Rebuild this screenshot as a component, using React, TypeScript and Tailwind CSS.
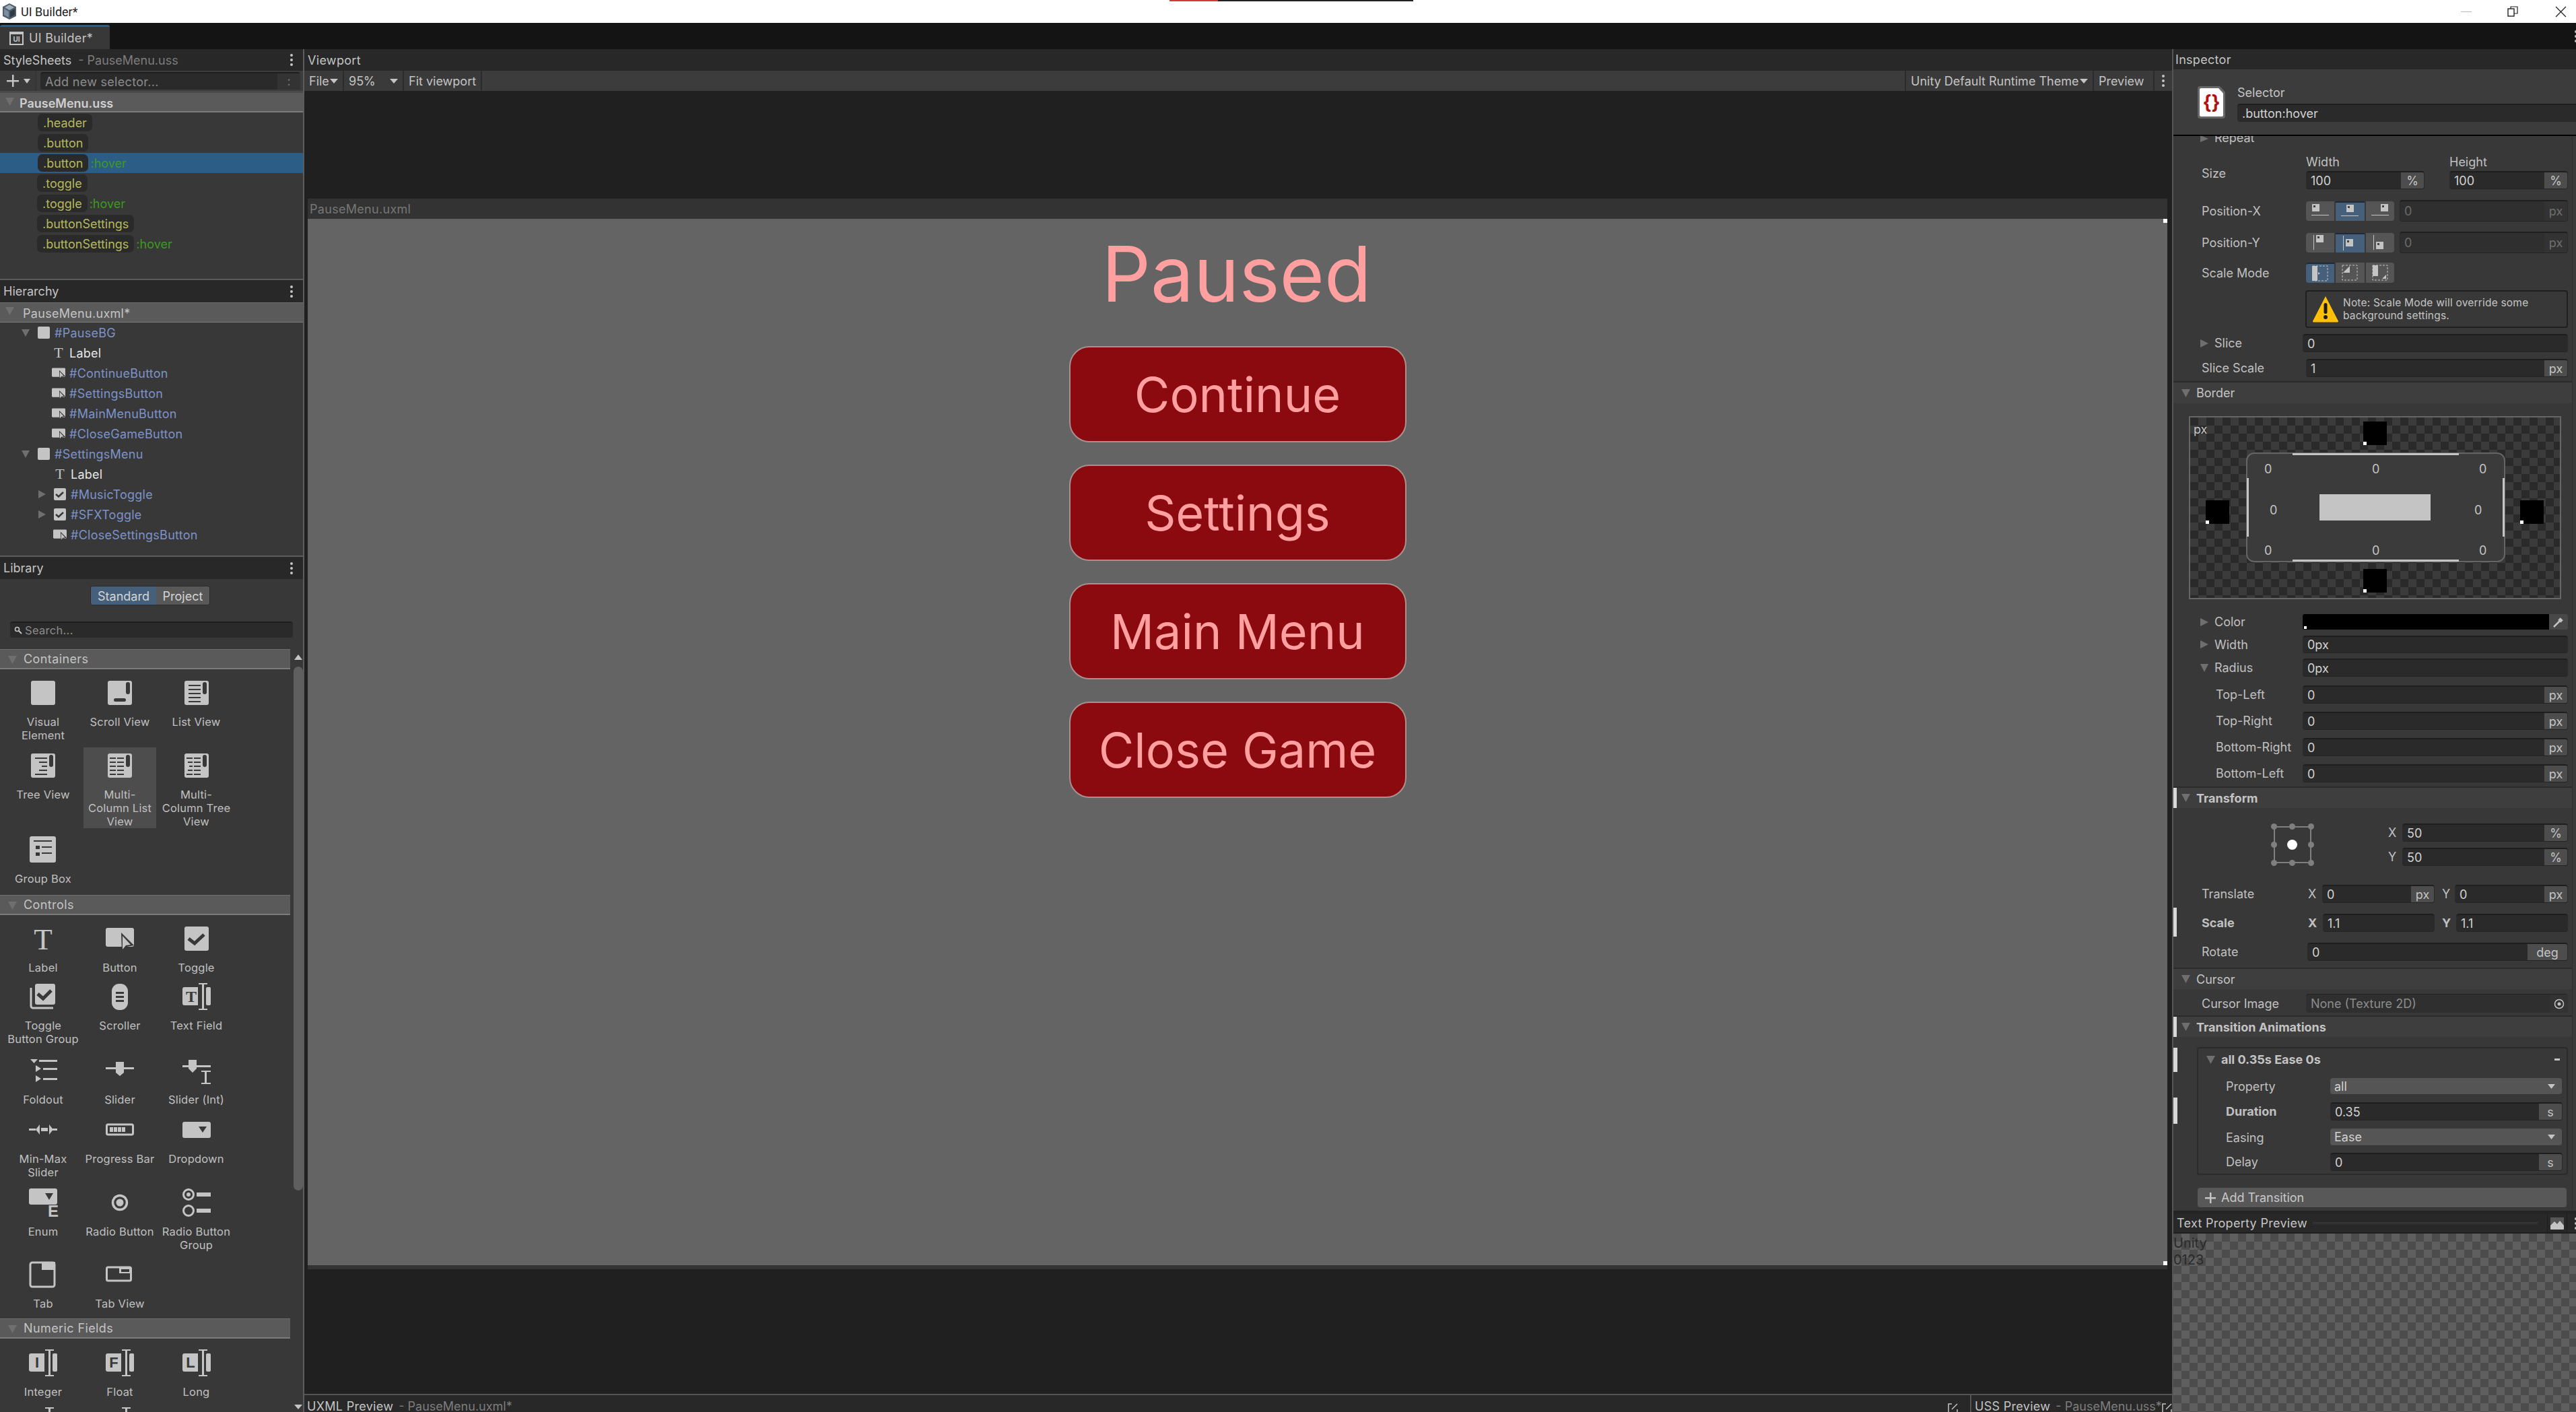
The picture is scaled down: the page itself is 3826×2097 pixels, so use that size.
import React from "react";
import clsx from "clsx";

const C = "#c4c4c4";
const D = "#383838";

function Tri({ dir = "down", cls, color = "#6f6f6f" }: { dir?: "down" | "right" | "up"; cls?: string; color?: string }) {
  const pts = dir === "down" ? "0,0 12,0 6,12" : dir === "right" ? "0,0 12,6 0,12" : "0,12 12,12 6,0";
  return (
    <svg viewBox="0 0 12 12" preserveAspectRatio="none" className={clsx("shrink-0", cls)}>
      <polygon points={pts} fill={color} />
    </svg>
  );
}

function Dots({ cls }: { cls?: string }) {
  return (
    <div className={clsx("flex flex-col gap-[3px]", cls)}>
      <div className="w-[4px] h-[4px] rounded-full bg-[#c4c4c4]" />
      <div className="w-[4px] h-[4px] rounded-full bg-[#c4c4c4]" />
      <div className="w-[4px] h-[4px] rounded-full bg-[#c4c4c4]" />
    </div>
  );
}

const Svg = ({ children, cls }: { children: React.ReactNode; cls?: string }) => (
  <svg viewBox="0 0 42 42" className={clsx("shrink-0 overflow-visible", cls ?? "w-[42px] h-[42px]")}>
    {children}
  </svg>
);

const Lines = ({ rows }: { rows: number[][] }) => (
  <>
    {rows.map((r, i) => (
      <rect key={i} x={r[0]} y={r[1]} width={r[2]} height={r[3]} fill={D} />
    ))}
  </>
);

const FieldIcon = ({ letter }: { letter: string }) => (
  <>
    <rect x="0" y="7" width="42" height="27" rx="3" fill={C} />
    <rect x="23" y="0" width="14" height="42" fill={D} />
    <rect x="24" y="1" width="13" height="2" fill={C} />
    <rect x="24" y="39" width="13" height="2" fill={C} />
    <rect x="29" y="1" width="3" height="40" fill={C} />
    <rect x="35" y="7" width="7" height="27" rx="2" fill={C} />
    <text x="12" y="28" fontSize="22" fontWeight="700" textAnchor="middle" fill={D} fontFamily="'Liberation Sans',sans-serif">
      {letter}
    </text>
  </>
);

const BeamTop = () => (
  <>
    <rect x="24" y="1" width="13" height="2" fill={C} />
    <rect x="29" y="1" width="3" height="40" fill={C} />
  </>
);

const icons: Record<string, React.ReactNode> = {
  visual: <rect x="3" y="3" width="36" height="36" rx="3" fill={C} />,
  scroll: (
    <>
      <rect x="3" y="3" width="36" height="36" rx="3" fill={C} />
      <rect x="30" y="5" width="6" height="18" rx="3" fill={D} />
      <rect x="12" y="29" width="18" height="5" rx="2.5" fill={D} />
    </>
  ),
  list: (
    <>
      <rect x="3" y="3" width="36" height="36" rx="3" fill={C} />
      <rect x="30" y="5" width="6" height="18" rx="3" fill={D} />
      <Lines rows={[[9, 9, 18, 2], [9, 15, 18, 2], [9, 21, 18, 2], [9, 27, 18, 2], [9, 33, 18, 2]]} />
    </>
  ),
  tree: (
    <>
      <rect x="3" y="3" width="36" height="36" rx="3" fill={C} />
      <rect x="30" y="5" width="6" height="18" rx="3" fill={D} />
      <Lines rows={[[9, 9, 18, 2], [15, 15, 12, 2], [19, 21, 8, 2], [15, 27, 12, 2], [9, 33, 18, 2]]} />
    </>
  ),
  mclist: (
    <>
      <rect x="3" y="3" width="36" height="36" rx="3" fill={C} />
      <rect x="30" y="5" width="6" height="18" rx="3" fill={D} />
      <Lines rows={[[6, 9, 9, 2], [17, 9, 10, 2], [6, 15, 9, 2], [17, 15, 10, 2], [6, 21, 9, 2], [17, 21, 10, 2], [6, 27, 9, 2], [17, 27, 10, 2], [6, 33, 9, 2], [17, 33, 10, 2]]} />
    </>
  ),
  mctree: (
    <>
      <rect x="3" y="3" width="36" height="36" rx="3" fill={C} />
      <rect x="30" y="5" width="6" height="18" rx="3" fill={D} />
      <Lines rows={[[6, 9, 9, 2], [17, 9, 10, 2], [8, 15, 7, 2], [17, 15, 10, 2], [10, 21, 5, 2], [17, 21, 10, 2], [8, 27, 7, 2], [17, 27, 10, 2], [6, 33, 9, 2], [17, 33, 10, 2]]} />
    </>
  ),
  group: (
    <>
      <rect x="1" y="1" width="39" height="39" rx="3" fill={C} />
      <Lines rows={[[7, 7, 27, 2], [10, 15, 6, 5], [19, 16, 15, 2], [10, 25, 6, 5], [19, 25, 15, 2]]} />
    </>
  ),
  label: (
    <text x="21" y="37" fontSize="45" textAnchor="middle" fill={C} fontFamily="'Liberation Serif',serif">
      T
    </text>
  ),
  button: (
    <>
      <rect x="0" y="5" width="42" height="28" rx="3" fill={C} />
      <polygon points="23,12 42,31 31,33 24,41" fill={D} />
      <polygon points="25,17 37,30 30,31 25,37" fill={C} />
    </>
  ),
  toggle: (
    <>
      <rect x="3" y="3" width="36" height="36" rx="3" fill={C} />
      <polyline points="9,21 18,28 32,15" fill="none" stroke={D} strokeWidth="5" />
    </>
  ),
  togglegroup: (
    <>
      <path d="M3 8 V35 a3 3 0 0 0 3 3 H36" fill="none" stroke={C} strokeWidth="3" />
      <rect x="9" y="2" width="30" height="31" rx="3" fill={C} />
      <polyline points="13,17 21,24 33,12" fill="none" stroke={D} strokeWidth="5" />
    </>
  ),
  scroller: (
    <>
      <rect x="9" y="2" width="24" height="39" rx="11" fill={C} />
      <Lines rows={[[15, 14, 12, 3], [15, 20, 12, 3], [15, 26, 12, 3]]} />
    </>
  ),
  textfield: (
    <>
      <rect x="0" y="7" width="42" height="27" rx="3" fill={C} />
      <rect x="23" y="0" width="14" height="42" fill={D} />
      <rect x="24" y="1" width="13" height="2" fill={C} />
      <rect x="24" y="39" width="13" height="2" fill={C} />
      <rect x="29" y="1" width="3" height="40" fill={C} />
      <rect x="35" y="7" width="7" height="27" rx="2" fill={C} />
      <text x="13" y="29" fontSize="24" fontWeight="700" textAnchor="middle" fill={D} fontFamily="'Liberation Serif',serif">
        T
      </text>
    </>
  ),
  foldout: (
    <>
      <polygon points="2,4 13,4 7.5,10" fill={C} />
      <rect x="15" y="5" width="27" height="3" fill={C} />
      <polygon points="10,13 18,18 10,23" fill={C} />
      <rect x="21" y="17" width="21" height="3" fill={C} />
      <polygon points="10,28 18,33 10,38" fill={C} />
      <rect x="21" y="32" width="21" height="3" fill={C} />
    </>
  ),
  slider: (
    <>
      <rect x="0" y="16" width="42" height="3" fill={C} />
      <polygon points="15,8 27,8 27,24 21,29 15,24" fill={C} />
    </>
  ),
  sliderint: (
    <>
      <rect x="0" y="13" width="42" height="3" fill={C} />
      <polygon points="9,5 21,5 21,18 15,24 9,18" fill={C} />
      <rect x="28" y="21" width="14" height="2" fill={C} />
      <rect x="28" y="39" width="14" height="2" fill={C} />
      <rect x="33" y="22" width="3" height="18" fill={C} />
    </>
  ),
  minmax: (
    <>
      <rect x="0" y="19" width="10" height="3" fill={C} />
      <polygon points="16,13 10,20.5 16,28" fill={C} />
      <rect x="18" y="18" width="10" height="5" fill={C} />
      <polygon points="30,13 36,20.5 30,28" fill={C} />
      <rect x="35" y="19" width="7" height="3" fill={C} />
    </>
  ),
  progress: (
    <>
      <rect x="1.5" y="13" width="39" height="15" rx="2" fill="none" stroke={C} strokeWidth="3" />
      <rect x="6" y="17" width="5" height="7" fill={C} />
      <rect x="12" y="17" width="5" height="7" fill={C} />
      <rect x="18" y="17" width="5" height="7" fill={C} />
      <rect x="24" y="17" width="5" height="7" fill={C} />
    </>
  ),
  dropdown: (
    <>
      <rect x="0" y="9" width="42" height="24" rx="3" fill={C} />
      <polygon points="24,16 36,16 30,25" fill={D} />
    </>
  ),
  enum: (
    <>
      <rect x="0" y="0" width="42" height="24" rx="3" fill={C} />
      <polygon points="24,7 36,7 30,17" fill={D} />
      <text x="36" y="42" fontSize="24" fontWeight="700" textAnchor="middle" fill={C} fontFamily="'Liberation Sans',sans-serif">
        E
      </text>
    </>
  ),
  radio: (
    <>
      <circle cx="21" cy="21" r="10.5" fill="none" stroke={C} strokeWidth="3.5" />
      <circle cx="21" cy="21" r="5.5" fill={C} />
    </>
  ),
  radiogroup: (
    <>
      <circle cx="9" cy="9" r="7.5" fill="none" stroke={C} strokeWidth="3" />
      <circle cx="9" cy="9" r="3" fill={C} />
      <rect x="21" y="6" width="21" height="6" fill={C} />
      <circle cx="9" cy="33" r="7.5" fill="none" stroke={C} strokeWidth="3" />
      <rect x="21" y="30" width="21" height="6" fill={C} />
    </>
  ),
  tab: (
    <>
      <rect x="2" y="3" width="36" height="36" rx="3" fill="none" stroke={C} strokeWidth="3" />
      <rect x="19" y="2" width="20" height="12" fill={C} />
    </>
  ),
  tabview: (
    <>
      <rect x="1.5" y="10" width="36" height="20" rx="2" fill="none" stroke={C} strokeWidth="3" />
      <rect x="20" y="10" width="18" height="9" fill={C} />
      <rect x="23" y="13" width="12" height="4" fill={D} />
    </>
  ),
  integer: <FieldIcon letter="I" />,
  float: <FieldIcon letter="F" />,
  long: <FieldIcon letter="L" />,
  beam: <BeamTop />,
  updown: <polygon points="21,10 27,18 15,18" fill={C} />,
};

type Cell = { t: string; i: string; hl?: boolean };

function LibItem({ t, i, hl }: Cell) {
  return (
    <div className={clsx("flex flex-col items-center pt-[6px] mx-[3px] h-fit", hl && "bg-[#4d4d4d]")}>
      <div className="h-[42px] flex items-center justify-center">
        <Svg>{icons[i]}</Svg>
      </div>
      <div className="mt-[12px] text-[16.5px] leading-[20px] text-center whitespace-pre-line text-[#c0c0c0] tracking-[0.2px]">{t}</div>
    </div>
  );
}

function LibRow({ cells, cls }: { cells: Cell[]; cls: string }) {
  return (
    <div className={clsx("grid grid-cols-[114px_114px_113px] pl-[7px] shrink-0", cls)}>
      {cells.map((c) => (
        <LibItem key={c.t} {...c} />
      ))}
    </div>
  );
}

function Section({ t }: { t: string }) {
  return (
    <div className="h-[30px] shrink-0 bg-[#5a5a5a] border-t border-t-[#6e6e6e] border-b-2 border-b-[#7c7c7c] flex items-center">
      <Tri cls="w-[13px] h-[12px] ml-[12px] mt-[2px]" />
      <span className="ml-[10px] text-[18px] text-[#c4c4c4] tracking-[0.4px]">{t}</span>
    </div>
  );
}

function PanelHead({ t, sub, cls }: { t: string; sub?: string; cls: string }) {
  return (
    <div className={clsx("flex items-center bg-[#282828] pl-[5px] pr-[15px] shrink-0", cls)}>
      <span className="text-[18px] text-[#c4c4c4]">{t}</span>
      {sub && <span className="ml-[10px] text-[18px] text-[#7d7d7d]">{sub}</span>}
      <Dots cls="ml-auto" />
    </div>
  );
}

function Sel({ name, hover, cls, pill }: { name: string; hover?: boolean; cls?: string; pill: string }) {
  return (
    <div className={clsx("h-[30px] flex items-center shrink-0", cls)}>
      <span className={clsx("h-[26px] flex items-center rounded-[7px] bg-[#2a2a2a] text-[18px] text-[#b5b95c]", pill)}>{name}</span>
      {hover && <span className="ml-[3px] text-[18px] text-[#3c9a1c]">:hover</span>}
    </div>
  );
}

function HierRow({ icon, t, cls, label }: { icon: "box" | "t" | "btn" | "chk"; t: string; cls: string; label?: boolean }) {
  return (
    <div className={clsx("h-[30px] flex items-center shrink-0", cls)}>
      {icon === "box" && (
        <>
          <Tri cls="w-[12px] h-[11px] mr-[12px]" />
          <div className="w-[18px] h-[18px] rounded-[2px] bg-[#c4c4c4] mr-[7px]" />
        </>
      )}
      {icon === "t" && <span className="w-[16px] mr-[8px] text-[22px] leading-[22px] text-[#c4c4c4] text-center font-['Liberation_Serif',serif]">T</span>}
      {icon === "btn" && <Svg cls="w-[20px] h-[20px] mr-[6px]">{icons.button}</Svg>}
      {icon === "chk" && (
        <>
          <Tri dir="right" cls="w-[11px] h-[12px] mr-[12px]" />
          <svg viewBox="0 0 18 18" className="w-[18px] h-[18px] mr-[7px]">
            <rect width="18" height="18" rx="2" fill={C} />
            <polyline points="3,9 7,12.5 14,6" fill="none" stroke={D} strokeWidth="2.5" />
          </svg>
        </>
      )}
      <span className={clsx("text-[18px] tracking-[0.25px]", label ? "text-[#e6e6e6]" : "text-[#7c93c9]")}>{t}</span>
    </div>
  );
}

function Left() {
  return (
    <div className="w-[452px] shrink-0 border-r-2 border-r-[#5c5c5c] flex flex-col bg-[#383838] h-full overflow-hidden">
      <PanelHead t="StyleSheets" sub="- PauseMenu.uss" cls="h-[32px]" />
      <div className="h-[30px] shrink-0 bg-[#3c3c3c] flex items-center">
        <div className="w-[54px] h-full bg-[#3a3a3a] flex items-center pl-[10px] gap-[7px] border-r border-r-[#2f2f2f]">
          <svg viewBox="0 0 18 18" className="w-[18px] h-[18px]">
            <rect x="0" y="8" width="18" height="2.5" fill={C} />
            <rect x="8" y="0" width="2.5" height="18" fill={C} />
          </svg>
          <Tri cls="w-[10px] h-[7px]" color={C} />
        </div>
        <div className="ml-[6px] w-[386px] h-[26px] bg-[#2a2a2a] rounded-[4px] border-t-2 border-t-[#1e1e1e] flex items-center justify-between">
          <span className="pl-[7px] text-[18px] text-[#8c8c8c] tracking-[0.3px]">Add new selector...</span>
          <span className="w-[34px] text-center text-[18px] leading-[24px] text-[#7a7a7a] bg-[#333333] h-full">:</span>
        </div>
      </div>
      <div className="h-[3px] shrink-0 bg-[#4a4a4a]" />
      <div className="h-[29px] shrink-0 bg-[#5a5a5a] border-b-2 border-b-[#7c7c7c] flex items-center pt-[4px]">
        <Tri cls="w-[13px] h-[12px] ml-[8px] mb-[6px]" />
        <span className="ml-[8px] text-[18px] font-semibold text-[#cfcfcf]">PauseMenu.uss</span>
      </div>
      <Sel name=".header" pill="px-[8px]" cls="pl-[56px]" />
      <Sel name=".button" pill="px-[8px]" cls="pl-[56px]" />
      <Sel name=".button" pill="px-[8px]" cls="pl-[56px] bg-[#2c5d87]" hover />
      <Sel name=".toggle" pill="px-[8px]" cls="pl-[55px]" />
      <Sel name=".toggle" pill="px-[8px]" cls="pl-[55px]" hover />
      <Sel name=".buttonSettings" pill="px-[8px]" cls="pl-[55px]" />
      <Sel name=".buttonSettings" pill="px-[8px]" cls="pl-[55px]" hover />
      <div className="h-[37px] shrink-0" />
      <div className="h-[2px] shrink-0 bg-[#5c5c5c]" />
      <PanelHead t="Hierarchy" cls="h-[33px]" />
      <div className="h-[30px] shrink-0 bg-[#5a5a5a] border-t border-t-[#6e6e6e] border-b border-b-[#7c7c7c] flex items-center pt-[2px]">
        <Tri cls="w-[13px] h-[12px] ml-[8px] mb-[6px]" />
        <span className="ml-[13px] text-[18px] text-[#c4c4c4] tracking-[0.3px]">PauseMenu.uxml*</span>
      </div>
      <HierRow icon="box" t="#PauseBG" cls="pl-[32px]" />
      <HierRow icon="t" t="Label" cls="pl-[79px]" label />
      <HierRow icon="btn" t="#ContinueButton" cls="pl-[77px]" />
      <HierRow icon="btn" t="#SettingsButton" cls="pl-[77px]" />
      <HierRow icon="btn" t="#MainMenuButton" cls="pl-[77px]" />
      <HierRow icon="btn" t="#CloseGameButton" cls="pl-[77px]" />
      <HierRow icon="box" t="#SettingsMenu" cls="pl-[32px]" />
      <HierRow icon="t" t="Label" cls="pl-[81px]" label />
      <HierRow icon="chk" t="#MusicToggle" cls="pl-[57px]" />
      <HierRow icon="chk" t="#SFXToggle" cls="pl-[57px]" />
      <HierRow icon="btn" t="#CloseSettingsButton" cls="pl-[79px]" />
      <div className="h-[16px] shrink-0" />
      <div className="h-[2px] shrink-0 bg-[#5c5c5c]" />
      <PanelHead t="Library" cls="h-[33px]" />
      <div className="flex mt-[10px] ml-[134px] h-[29px] w-fit rounded-[4px] border border-[#2a2a2a] overflow-hidden shrink-0">
        <span className="w-[97px] bg-[#46607c] text-center text-[18px] leading-[29px] text-[#d4d4d4]">Standard</span>
        <span className="w-[79px] bg-[#585858] text-center text-[18px] leading-[29px] text-[#d4d4d4]">Project</span>
      </div>
      <div className="mt-[24px] ml-[15px] w-[420px] h-[24px] bg-[#2a2a2a] rounded-[4px] border-t-2 border-t-[#1e1e1e] flex items-center shrink-0">
        <svg viewBox="0 0 12 12" className="w-[12px] h-[12px] ml-[6px]">
          <circle cx="4.5" cy="4.5" r="3" fill="none" stroke={C} strokeWidth="1.6" />
          <line x1="7" y1="7" x2="11" y2="11" stroke={C} strokeWidth="2" />
        </svg>
        <span className="ml-[4px] text-[16.5px] text-[#8c8c8c] tracking-[0.3px]">Search...</span>
      </div>
      <div className="mt-[17px] flex flex-1 min-h-0 overflow-hidden">
        <div className="w-[431px] shrink-0 flex flex-col">
          <Section t="Containers" />
          <LibRow
            cls="mt-[8px] h-[108px]"
            cells={[
              { t: "Visual\nElement", i: "visual" },
              { t: "Scroll View", i: "scroll" },
              { t: "List View", i: "list" },
            ]}
          />
          <LibRow
            cls="h-[125px]"
            cells={[
              { t: "Tree View", i: "tree" },
              { t: "Multi-\nColumn List\nView", i: "mclist", hl: true },
              { t: "Multi-\nColumn Tree\nView", i: "mctree" },
            ]}
          />
          <LibRow cls="h-[94px]" cells={[{ t: "Group Box", i: "group" }]} />
          <Section t="Controls" />
          <LibRow
            cls="mt-[8px] h-[86px]"
            cells={[
              { t: "Label", i: "label" },
              { t: "Button", i: "button" },
              { t: "Toggle", i: "toggle" },
            ]}
          />
          <LibRow
            cls="h-[110px]"
            cells={[
              { t: "Toggle\nButton Group", i: "togglegroup" },
              { t: "Scroller", i: "scroller" },
              { t: "Text Field", i: "textfield" },
            ]}
          />
          <LibRow
            cls="h-[88px]"
            cells={[
              { t: "Foldout", i: "foldout" },
              { t: "Slider", i: "slider" },
              { t: "Slider (Int)", i: "sliderint" },
            ]}
          />
          <LibRow
            cls="h-[108px]"
            cells={[
              { t: "Min-Max\nSlider", i: "minmax" },
              { t: "Progress Bar", i: "progress" },
              { t: "Dropdown", i: "dropdown" },
            ]}
          />
          <LibRow
            cls="h-[107px]"
            cells={[
              { t: "Enum", i: "enum" },
              { t: "Radio Button", i: "radio" },
              { t: "Radio Button\nGroup", i: "radiogroup" },
            ]}
          />
          <LibRow
            cls="h-[92px]"
            cells={[
              { t: "Tab", i: "tab" },
              { t: "Tab View", i: "tabview" },
            ]}
          />
          <Section t="Numeric Fields" />
          <LibRow
            cls="mt-[9px] h-[86px]"
            cells={[
              { t: "Integer", i: "integer" },
              { t: "Float", i: "float" },
              { t: "Long", i: "long" },
            ]}
          />
          <div className="grid grid-cols-[114px_114px_113px] pl-[7px] pt-[6px] shrink-0">
            <div className="flex justify-center"><Svg>{icons.beam}</Svg></div>
            <div className="flex justify-center"><Svg>{icons.beam}</Svg></div>
            <div className="flex justify-center"><Svg>{icons.updown}</Svg></div>
          </div>
        </div>
        <div className="w-[19px] shrink-0 flex flex-col items-center pl-[4px]">
          <Tri dir="up" cls="w-[12px] h-[8px] mt-[8px]" color={C} />
          <div className="mt-[10px] w-[14px] h-[778px] rounded-full bg-[#5f5f5f] shrink-0" />
          <Tri dir="down" cls="w-[12px] h-[7px] mt-auto mb-[4px]" color={C} />
        </div>
      </div>
    </div>
  );
}

function MenuBtn({ t, cls, arrow }: { t: string; cls: string; arrow?: boolean }) {
  return (
    <div className={clsx("h-full bg-[#3a3a3a] border-r-2 border-r-[#2b2b2b] flex items-center justify-between px-[7px] text-[18px] text-[#c4c4c4] shrink-0", cls)}>
      <span className="whitespace-nowrap">{t}</span>
      {arrow && <Tri cls="w-[12px] h-[7px]" color={C} />}
    </div>
  );
}

function GameBtn({ t }: { t: string }) {
  return (
    <div className="w-[501px] h-[143px] rounded-[30px] bg-[#8a0a10] border-2 border-[#a8908f] flex items-center justify-center text-[72px] leading-none text-[#ff9f9f]">
      {t}
    </div>
  );
}

const ExtIcon = () => (
  <svg viewBox="0 0 16 16" className="w-[16px] h-[16px] shrink-0">
    <path d="M6 2 H1 V15 H14 V10" fill="none" stroke={C} strokeWidth="1.5" />
    <line x1="6" y1="10" x2="14" y2="2" stroke={C} strokeWidth="1.5" />
  </svg>
);

function Center() {
  return (
    <div className="flex-1 min-w-0 flex flex-col bg-[#202020] h-full">
      <div className="h-[32px] shrink-0 bg-[#282828] flex items-center pl-[5px] text-[18px] text-[#c4c4c4] tracking-[0.3px]">Viewport</div>
      <div className="h-[30px] shrink-0 bg-[#3c3c3c] flex items-center">
        <MenuBtn t="File" cls="w-[59px]" arrow />
        <MenuBtn t="95%" cls="w-[89px]" arrow />
        <MenuBtn t="Fit viewport" cls="w-[116px]" />
        <div className="flex-1" />
        <MenuBtn t="Unity Default Runtime Theme" cls="w-[281px] border-l-2 border-l-[#2b2b2b]" arrow />
        <MenuBtn t="Preview" cls="w-[90px]" />
        <div className="w-[26px] h-full bg-[#3a3a3a] flex items-center justify-center">
          <Dots />
        </div>
      </div>
      <div className="h-[160px] shrink-0" />
      <div className="ml-[5px] mr-[7px] h-[30px] shrink-0 bg-[#333333] flex items-center pl-[3px] text-[18px] text-[#767676] tracking-[0.3px]">PauseMenu.uxml</div>
      <div className="relative ml-[5px] mr-[7px] h-[1554px] shrink-0 bg-[#646464] flex flex-col items-center pt-[12px]">
        <div className="absolute top-0 right-0 w-[6px] h-[6px] bg-white" />
        <div className="absolute bottom-0 right-0 w-[6px] h-[6px] bg-white" />
        <div className="text-[114px] leading-[140px] text-[#ff9f9f] -ml-[3px]">Paused</div>
        <div className="mt-[37px] flex flex-col gap-[33px]">
          <GameBtn t="Continue" />
          <GameBtn t="Settings" />
          <GameBtn t="Main Menu" />
          <GameBtn t="Close Game" />
        </div>
      </div>
      <div className="ml-[5px] mr-[7px] h-[6px] shrink-0 bg-[#333333]" />
      <div className="flex-1" />
      <div className="h-[27px] shrink-0 bg-[#282828] border-t-2 border-t-[#555555] flex text-[18px] overflow-hidden whitespace-nowrap">
        <div className="w-[2474px] shrink-0 flex items-start pt-[3px] pl-[4px] pr-[17px]">
          <span className="text-[#c4c4c4] tracking-[0.3px]">UXML Preview</span>
          <span className="ml-[8px] text-[#7d7d7d]">- PauseMenu.uxml*</span>
          <span className="ml-auto pt-[8px]"><ExtIcon /></span>
        </div>
        <div className="flex-1 border-l-2 border-l-[#555555] flex items-start pt-[3px] pl-[5px] pr-[4px]">
          <span className="text-[#c4c4c4] tracking-[0.3px]">USS Preview</span>
          <span className="ml-[8px] text-[#7d7d7d]">- PauseMenu.uss*</span>
          <span className="ml-auto pt-[8px]"><ExtIcon /></span>
        </div>
      </div>
    </div>
  );
}

function Field({ v, unit, cls, dim, unitCls }: { v: string; unit?: string; cls?: string; dim?: boolean; unitCls?: string }) {
  return (
    <div className={clsx("self-stretch flex rounded-[4px] border-t-2 border-t-[#1e1e1e] border-x border-x-[#2a2a2a] border-b border-b-[#242424] overflow-hidden shrink-0 text-[18px]", dim ? "bg-[#2f2f2f]" : "bg-[#2a2a2a]", cls)}>
      <span className={clsx("flex-1 pl-[6px] flex items-center", dim ? "text-[#6b6b6b]" : "text-[#d2d2d2]")}>{v}</span>
      {unit && (
        <span className={clsx("flex items-center justify-center", dim ? "bg-[#333333] text-[#6f6f6f]" : "bg-[#4d4d4d] text-[#c4c4c4]", unitCls ?? "w-[34px]")}>{unit}</span>
      )}
    </div>
  );
}

function Row({ label, cls, children, bold, kind = "plain" }: { label: string; cls: string; children?: React.ReactNode; bold?: boolean; kind?: "plain" | "fold" | "open" | "indent" }) {
  const t = clsx("text-[18px] text-[#c0c0c0] whitespace-nowrap", bold && "font-bold");
  return (
    <div className={clsx("flex items-center shrink-0", kind === "plain" && "pl-[42px]", (kind === "fold" || kind === "open") && "pl-[40px]", kind === "indent" && "pl-[63px]", cls)}>
      {kind === "fold" && <Tri dir="right" cls="w-[12px] h-[12px] mr-[9px]" />}
      {kind === "open" && <Tri dir="down" cls="w-[12px] h-[12px] mr-[9px]" />}
      <span className={clsx(t, kind === "plain" && "w-[155px]", (kind === "fold" || kind === "open") && "w-[131px]", kind === "indent" && "w-[129px]")}>{label}</span>
      {children}
    </div>
  );
}

function Head({ t, cls, bold, mark }: { t: string; cls: string; bold?: boolean; mark?: boolean }) {
  return (
    <div className={clsx("relative h-[32px] bg-[#3e3e3e] flex items-center pl-[12px] border-t-2 border-t-[#2b2b2b] shrink-0", cls)}>
      {mark && <div className="absolute left-0 top-0 bottom-0 w-[5px] bg-[#d8d8d8]" />}
      <Tri cls="w-[13px] h-[12px]" />
      <span className={clsx("ml-[9px] text-[18px] text-[#c4c4c4]", bold && "font-bold")}>{t}</span>
    </div>
  );
}

const PosIcon = ({ imgX, imgY, line }: { imgX: number; imgY: number; line: "h" | "v" }) => (
  <svg viewBox="0 0 26 22" className="w-[26px] h-[22px]">
    <rect x={imgX} y={imgY} width="11" height="11" fill={C} />
    <rect x={imgX + 2} y={imgY + 2} width="3" height="3" fill="#444" />
    {line === "h" ? <rect x="0" y="17" width="26" height="1" fill={C} /> : <rect x="3" y="0" width="1" height="22" fill={C} />}
  </svg>
);

function Seg({ cls, on, items }: { cls: string; on: number; items: React.ReactNode[] }) {
  return (
    <div className={clsx("flex gap-[2px] w-[131px] shrink-0", cls)}>
      {items.map((it, i) => (
        <div key={i} className={clsx("flex-1 flex items-center justify-center first:rounded-l-[4px] last:rounded-r-[4px]", i === on ? "bg-[#46607c] border-t-2 border-t-[#1e2a38]" : "bg-[#555555]")}>
          {it}
        </div>
      ))}
    </div>
  );
}

const ScaleIcon = ({ v }: { v: number }) => (
  <svg viewBox="0 0 24 24" className="w-[24px] h-[24px]">
    <rect x="1" y="1" width="22" height="22" fill="none" stroke={C} strokeWidth="1" strokeDasharray="3 2" />
    {v === 0 && (
      <>
        <rect x="0" y="1" width="8" height="22" fill={C} />
        <polygon points="9,10 12,12 9,14" fill={C} />
      </>
    )}
    {v === 1 && <polygon points="2,12 12,12 12,2" fill={C} />}
    {v === 2 && (
      <>
        <rect x="1" y="1" width="8" height="16" fill={C} />
        <polygon points="15,21 21,21 21,15" fill={C} />
      </>
    )}
  </svg>
);

function ColorSwatch({ cls }: { cls: string }) {
  return (
    <div className={clsx("w-[35px] h-[35px] bg-black shrink-0", cls)}>
      <div className="absolute left-0 bottom-0 w-[5px] h-[5px] bg-white" />
    </div>
  );
}

function BorderPreview() {
  const z = "absolute text-[18px] leading-[20px] text-[#c4c4c4]";
  return (
    <div className="mt-[19px] ml-[23px] w-[553px] h-[272px] border-2 border-[#666666] relative bg-[conic-gradient(#3b3b3b_25%,#2a2a2a_0_50%,#3b3b3b_0_75%,#2a2a2a_0)] bg-size-[24px_24px] shrink-0">
      <span className="absolute left-[5px] top-[4px] text-[18px] text-[#c4c4c4]">px</span>
      <ColorSwatch cls="absolute left-[257px] top-[6px]" />
      <ColorSwatch cls="absolute left-[23px] top-[123px]" />
      <ColorSwatch cls="absolute left-[490px] top-[123px]" />
      <ColorSwatch cls="absolute left-[257px] top-[225px]" />
      <div className="absolute left-[83px] top-[52px] w-[385px] h-[163px] rounded-[12px] border-2 border-[#666666] bg-[#3b3b3b]">
        <div className="absolute left-[67px] -top-[1px] w-[247px] h-[3px] bg-[#c4c4c4]" />
        <div className="absolute left-[67px] -bottom-[1px] w-[247px] h-[3px] bg-[#c4c4c4]" />
        <div className="absolute -left-[1px] top-[36px] h-[87px] w-[3px] bg-[#c4c4c4]" />
        <div className="absolute -right-[1px] top-[36px] h-[87px] w-[3px] bg-[#c4c4c4]" />
        <div className="absolute left-[107px] top-[60px] w-[165px] h-[39px] bg-[#c4c4c4]" />
        <span className={clsx(z, "left-[25px] top-[13px]")}>0</span>
        <span className={clsx(z, "left-[185px] top-[13px]")}>0</span>
        <span className={clsx(z, "left-[344px] top-[13px]")}>0</span>
        <span className={clsx(z, "left-[33px] top-[74px]")}>0</span>
        <span className={clsx(z, "left-[337px] top-[74px]")}>0</span>
        <span className={clsx(z, "left-[25px] top-[134px]")}>0</span>
        <span className={clsx(z, "left-[185px] top-[134px]")}>0</span>
        <span className={clsx(z, "left-[344px] top-[134px]")}>0</span>
      </div>
    </div>
  );
}

function Dropdown({ v }: { v: string }) {
  return (
    <div className="w-[344px] h-full bg-[#555555] rounded-[4px] flex items-center justify-between pl-[6px] pr-[4px] text-[18px] text-[#d2d2d2] border-b border-b-[#333333]">
      {v}
      <Tri cls="w-[11px] h-[7px] mr-[6px]" color={C} />
    </div>
  );
}

function Pivot() {
  const dot = "w-[9px] h-[9px] rounded-full bg-[#7f7f7f]";
  return (
    <div className="ml-[145px] w-[64px] h-[63px] relative shrink-0">
      <div className="absolute inset-[4px] border-2 border-[#7f7f7f]" />
      <div className="absolute inset-0 grid grid-cols-3 grid-rows-3 items-center justify-items-center">
        <div className={clsx(dot, "self-start justify-self-start")} />
        <div className={clsx(dot, "self-start")} />
        <div className={clsx(dot, "self-start justify-self-end")} />
        <div className={clsx(dot, "justify-self-start")} />
        <div className="w-[15px] h-[15px] rounded-full bg-white" />
        <div className={clsx(dot, "justify-self-end")} />
        <div className={clsx(dot, "self-end justify-self-start")} />
        <div className={clsx(dot, "self-end")} />
        <div className={clsx(dot, "self-end justify-self-end")} />
      </div>
    </div>
  );
}

function Inspector() {
  const axis = "text-[18px] text-[#c0c0c0]";
  return (
    <div className="w-[600px] shrink-0 border-l-2 border-l-[#555555] flex flex-col h-full">
      <div className="h-[30px] shrink-0 bg-[#282828] flex items-center pl-[3px] text-[18px] text-[#c4c4c4] tracking-[0.3px]">Inspector</div>
      <div className="h-[99px] shrink-0 bg-[#3c3c3c] flex items-start border-b-2 border-b-black">
        <div className="mt-[25px] ml-[36px] w-[41px] h-[48px] bg-[#666666] rounded-[4px] p-[3px] shrink-0 [clip-path:polygon(0_0,80%_0,100%_18%,100%_100%,0_100%)]">
          <div className="w-full h-full bg-white rounded-[2px] flex items-center justify-center text-[28px] font-bold text-[#b01212] leading-none [clip-path:polygon(0_0,80%_0,100%_18%,100%_100%,0_100%)]">{"{}"}</div>
        </div>
        <div className="ml-[18px] flex-1 flex flex-col">
          <span className="mt-[21px] h-[30px] text-[18px] text-[#c4c4c4]">Selector</span>
          <div className="h-[27px] bg-[#2a2a2a] border-t-2 border-t-[#1e1e1e] rounded-l-[4px] pl-[7px] flex items-center text-[18px] text-[#d2d2d2]">.button:hover</div>
        </div>
      </div>
      <div className="h-[1596px] shrink-0 bg-[#383838] flex overflow-hidden">
        <div className="w-[592px] shrink-0 flex flex-col">
          <div className="h-[16px] shrink-0 overflow-hidden pl-[40px] flex items-start">
            <Tri dir="right" cls="w-[12px] h-[10px] -mt-[1px] mr-[9px]" />
            <span className="-mt-[11px] text-[18px] text-[#c0c0c0]">Repeat</span>
          </div>
          <div className="mt-[11px] h-[52px] pl-[42px] flex shrink-0">
            <span className="w-[155px] pt-[15px] text-[18px] text-[#c0c0c0]">Size</span>
            <div className="w-[213px] flex flex-col shrink-0">
              <span className="h-[25px] text-[18px] text-[#c0c0c0] leading-[24px]">Width</span>
              <Field v="100" unit="%" cls="w-[176px] h-[27px]" />
            </div>
            <div className="w-[176px] flex flex-col shrink-0">
              <span className="h-[25px] text-[18px] text-[#c0c0c0] leading-[24px]">Height</span>
              <Field v="100" unit="%" cls="w-[176px] h-[27px]" />
            </div>
          </div>
          <Row label="Position-X" cls="mt-[16px] h-[32px]">
            <Seg cls="h-[29px]" on={1} items={[<PosIcon imgX={1} imgY={1} line="h" />, <PosIcon imgX={8} imgY={1} line="h" />, <PosIcon imgX={14} imgY={1} line="h" />]} />
            <Field v="0" unit="px" dim cls="ml-[8px] w-[250px]" />
          </Row>
          <Row label="Position-Y" cls="mt-[15px] h-[32px]">
            <Seg cls="h-[29px]" on={1} items={[<PosIcon imgX={7} imgY={0} line="v" />, <PosIcon imgX={7} imgY={5} line="v" />, <PosIcon imgX={7} imgY={10} line="v" />]} />
            <Field v="0" unit="px" dim cls="ml-[8px] w-[250px]" />
          </Row>
          <Row label="Scale Mode" cls="mt-[14px] h-[30px]">
            <Seg cls="h-[30px]" on={0} items={[<ScaleIcon v={0} />, <ScaleIcon v={1} />, <ScaleIcon v={2} />]} />
          </Row>
          <div className="mt-[11px] ml-[196px] w-[390px] h-[56px] rounded-[4px] border-2 border-[#1f1f1f] flex items-center shrink-0">
            <svg viewBox="0 0 40 40" className="w-[40px] h-[40px] ml-[8px] shrink-0">
              <path d="M20 1 L39 38 a1.5 1.5 0 0 1 -1 1.5 H2 a1.5 1.5 0 0 1 -1 -1.5 Z" fill="#ffc107" />
              <rect x="17.5" y="11" width="5" height="16" rx="2.5" fill="#1c1c1c" />
              <circle cx="20" cy="32" r="3" fill="#1c1c1c" />
            </svg>
            <span className="ml-[6px] text-[15.5px] leading-[19px] text-[#c4c4c4] tracking-[0.2px]">
              Note: Scale Mode will override some
              <br />
              background settings.
            </span>
          </div>
          <Row label="Slice" kind="fold" cls="mt-[9px] h-[27px]">
            <Field v="0" cls="w-[394px]" />
          </Row>
          <Row label="Slice Scale" cls="mt-[10px] h-[27px]">
            <Field v="1" unit="px" cls="w-[389px]" />
          </Row>
          <Head t="Border" cls="mt-[6px] h-[33px]" />
          <BorderPreview />
          <Row label="Color" kind="fold" cls="mt-[22px] h-[23px]">
            <div className="w-[394px] h-full flex rounded-[3px] overflow-hidden shrink-0">
              <div className="flex-1 bg-black relative">
                <div className="absolute left-[2px] bottom-[1px] w-[4px] h-[4px] bg-white" />
              </div>
              <div className="w-[28px] bg-[#484848] flex items-center justify-center">
                <svg viewBox="0 0 18 18" className="w-[18px] h-[18px]">
                  <line x1="2" y1="16" x2="11" y2="7" stroke={C} strokeWidth="2.5" />
                  <line x1="10" y1="4" x2="14" y2="8" stroke={C} strokeWidth="5" />
                </svg>
              </div>
            </div>
          </Row>
          <Row label="Width" kind="fold" cls="mt-[9px] h-[26px]">
            <Field v="0px" cls="w-[394px]" />
          </Row>
          <Row label="Radius" kind="open" cls="mt-[8px] h-[27px]">
            <Field v="0px" cls="w-[394px]" />
          </Row>
          <Row label="Top-Left" kind="indent" cls="mt-[13px] h-[27px]">
            <Field v="0" unit="px" cls="w-[394px]" />
          </Row>
          <Row label="Top-Right" kind="indent" cls="mt-[12px] h-[27px]">
            <Field v="0" unit="px" cls="w-[394px]" />
          </Row>
          <Row label="Bottom-Right" kind="indent" cls="mt-[12px] h-[27px]">
            <Field v="0" unit="px" cls="w-[394px]" />
          </Row>
          <Row label="Bottom-Left" kind="indent" cls="mt-[12px] h-[27px]">
            <Field v="0" unit="px" cls="w-[394px]" />
          </Row>
          <Head t="Transform" bold mark cls="mt-[6px]" />
          <div className="mt-[23px] h-[63px] flex shrink-0">
            <Pivot />
            <div className="ml-[110px] flex flex-col gap-[9px]">
              <div className="flex items-center h-[27px]">
                <span className={clsx(axis, "w-[21px]")}>X</span>
                <Field v="50" unit="%" cls="w-[246px]" />
              </div>
              <div className="flex items-center h-[27px]">
                <span className={clsx(axis, "w-[21px]")}>Y</span>
                <Field v="50" unit="%" cls="w-[246px]" />
              </div>
            </div>
          </div>
          <Row label="Translate" cls="mt-[28px] h-[27px]">
            <span className={clsx(axis, "w-[24px] pl-[3px]")}>X</span>
            <Field v="0" unit="px" cls="w-[167px]" />
            <span className={clsx(axis, "w-[30px] pl-[11px]")}>Y</span>
            <Field v="0" unit="px" cls="w-[168px]" />
          </Row>
          <div className="relative shrink-0">
            <div className="absolute left-0 top-[7px] w-[5px] h-[43px] bg-[#d8d8d8]" />
            <Row label="Scale" bold cls="mt-[16px] h-[27px]">
              <span className={clsx(axis, "w-[25px] pl-[3px] font-bold")}>X</span>
              <Field v="1.1" cls="w-[166px]" />
              <span className={clsx(axis, "w-[32px] pl-[11px] font-bold")}>Y</span>
              <Field v="1.1" cls="w-[166px]" />
            </Row>
          </div>
          <Row label="Rotate" cls="mt-[16px] h-[27px]">
            <Field v="0" unit="deg" unitCls="w-[59px]" cls="ml-[2px] w-[387px]" />
          </Row>
          <Head t="Cursor" cls="mt-[10px]" />
          <Row label="Cursor Image" cls="mt-[7px] h-[28px]">
            <div className="w-[389px] h-full flex bg-[#2f2f2f] rounded-[4px] border-t border-t-[#222222] overflow-hidden text-[18px] text-[#8c8c8c]">
              <span className="flex-1 pl-[7px] flex items-center">None (Texture 2D)</span>
              <span className="w-[27px] bg-[#333333] flex items-center justify-center">
                <svg viewBox="0 0 16 16" className="w-[16px] h-[16px]">
                  <circle cx="8" cy="8" r="6.5" fill="none" stroke={C} strokeWidth="1.5" />
                  <circle cx="8" cy="8" r="2.5" fill={C} />
                </svg>
              </span>
            </div>
          </Row>
          <Head t="Transition Animations" bold mark cls="mt-[4px]" />
          <div className="relative shrink-0">
            <div className="absolute left-0 top-[16px] w-[6px] h-[36px] bg-[#d8d8d8]" />
            <div className="absolute left-0 top-[90px] w-[6px] h-[39px] bg-[#d8d8d8]" />
            <div className="mt-[15px] ml-[35px] w-[551px] h-[190px] rounded-[4px] border-2 border-[#2b2b2b] flex flex-col">
              <div className="h-[33px] flex items-center pl-[12px] pr-[10px] shrink-0">
                <Tri cls="w-[13px] h-[12px]" />
                <span className="ml-[9px] text-[18px] font-bold text-[#c4c4c4]">all 0.35s Ease 0s</span>
                <span className="ml-auto w-[8px] h-[3px] bg-[#c4c4c4]" />
              </div>
              <div className="mt-[11px] h-[25px] flex items-center pl-[41px] shrink-0">
                <span className="w-[155px] text-[18px] text-[#c0c0c0]">Property</span>
                <Dropdown v="all" />
              </div>
              <div className="mt-[11px] h-[27px] flex items-center pl-[41px] shrink-0">
                <span className="w-[155px] text-[18px] font-bold text-[#c0c0c0]">Duration</span>
                <Field v="0.35" unit="s" cls="w-[345px]" />
              </div>
              <div className="mt-[12px] h-[26px] flex items-center pl-[41px] shrink-0">
                <span className="w-[155px] text-[18px] text-[#c0c0c0]">Easing</span>
                <Dropdown v="Ease" />
              </div>
              <div className="mt-[10px] h-[27px] flex items-center pl-[41px] shrink-0">
                <span className="w-[155px] text-[18px] text-[#c0c0c0]">Delay</span>
                <Field v="0" unit="s" cls="w-[345px]" />
              </div>
            </div>
          </div>
          <div className="mt-[19px] ml-[36px] w-[548px] h-[30px] bg-[#585858] rounded-[4px] flex items-center pl-[11px] border-b border-b-[#333333] shrink-0">
            <svg viewBox="0 0 16 16" className="w-[16px] h-[16px]">
              <rect x="0" y="7" width="16" height="2.5" fill={C} />
              <rect x="7" y="0" width="2.5" height="16" fill={C} />
            </svg>
            <span className="ml-[8px] text-[18px] text-[#c8c8c8]">Add Transition</span>
          </div>
        </div>
        <div className="flex-1 border-l border-l-[#2f2f2f] bg-[#3a3a3a]" />
      </div>
      <div className="h-[5px] shrink-0 bg-[#242424]" />
      <div className="h-[29px] shrink-0 bg-[#282828] border-b-2 border-b-[#1e1e1e] flex items-center pl-[5px] overflow-hidden">
        <span className="text-[18px] text-[#c4c4c4] whitespace-nowrap tracking-[0.3px]">Text Property Preview</span>
        <div className="ml-[8px] flex-1 h-[3px] border-y border-y-[#3a3a3a]" />
        <div className="ml-[14px] w-[30px] h-full border-x border-x-[#1e1e1e] flex items-center justify-center">
          <svg viewBox="0 0 20 18" className="w-[20px] h-[18px]">
            <rect width="20" height="18" rx="1" fill={C} />
            <polygon points="0,12 6,6 10,10 14,5 20,12 20,0 0,0" fill="#555" />
          </svg>
        </div>
        <Dots cls="ml-[11px] -mr-[2px]" />
      </div>
      <div className="flex-1 bg-[conic-gradient(#5f5f5f_25%,#4c4c4c_0_50%,#5f5f5f_0_75%,#4c4c4c_0)] bg-size-[24px_24px] text-[#2a2a2a] text-[20px] leading-[25px] pt-[2px]">
        Unity
        <br />
        0123
      </div>
    </div>
  );
}

export default function App() {
  return (
    <div className="relative w-[3826px] h-[2097px] overflow-hidden flex flex-col bg-[#141414] font-['Inter','Noto_Sans',sans-serif]">
      <div className="absolute top-0 left-[1737px] w-[72px] h-[2px] bg-[#d23b3b]" />
      <div className="absolute top-0 left-[1809px] w-[290px] h-[2px] bg-[#222222]" />
      <div className="h-[34px] shrink-0 bg-white flex items-center pl-[4px]">
        <svg viewBox="0 0 20 24" className="w-[20px] h-[24px] shrink-0">
          <polygon points="10,0 20,5 20,19 10,24 0,19 0,5" fill="#4f5f6e" />
          <polygon points="10,2 17,6 10,10 3,6" fill="#9fb0bd" />
          <polygon points="2,8 9,12 9,21 2,17" fill="#7d8f9e" />
          <polygon points="18,8 11,12 11,21 18,17" fill="#2f3a44" />
        </svg>
        <span className="ml-[7px] text-[18px] text-[#222222] font-['Roboto',sans-serif]">UI Builder*</span>
        <div className="ml-auto flex items-center">
          <div className="w-[16px] h-[1px] bg-[#b8b8b8]" />
          <svg viewBox="0 0 16 16" className="ml-[53px] w-[16px] h-[16px]">
            <rect x="1" y="4" width="9" height="11" fill="none" stroke="#222" strokeWidth="1.4" />
            <path d="M5 4 V1 H15 V11 H10" fill="none" stroke="#222" strokeWidth="1.2" />
          </svg>
          <svg viewBox="0 0 16 16" className="ml-[55px] mr-[14px] w-[17px] h-[17px]">
            <path d="M1 1 L15 15 M15 1 L1 15" stroke="#222" strokeWidth="1.2" />
          </svg>
        </div>
      </div>
      <div className="h-[39px] shrink-0 flex items-end justify-between">
        <div className="w-[163px] h-[36px] bg-[#383838] border-t-[3px] border-t-[#2c5d87] rounded-t-[3px] flex items-center pl-[14px]">
          <div className="w-[21px] h-[20px] border-2 border-[#c4c4c4] border-t-4 flex items-center justify-center text-[10px] font-bold leading-none text-[#c4c4c4]">UI</div>
          <span className="ml-[8px] text-[18px] text-[#c4c4c4] tracking-[0.3px]">UI Builder*</span>
        </div>
        <Dots cls="mb-[10px] -mr-[2px]" />
      </div>
      <div className="h-[2024px] shrink-0 flex">
        <Left />
        <Center />
        <Inspector />
      </div>
    </div>
  );
}
